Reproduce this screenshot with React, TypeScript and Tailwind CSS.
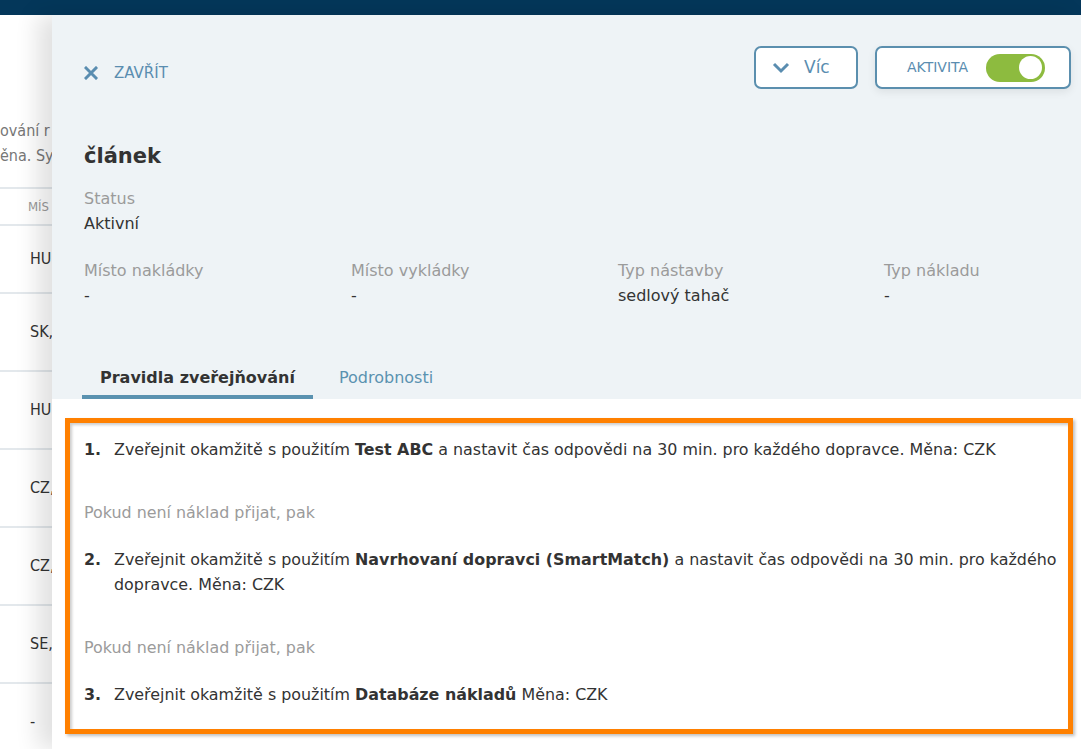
import React from 'react';

const font = { fontFamily: '"DejaVu Sans", "Liberation Sans", sans-serif' };
const narrow = { fontFamily: '"DejaVu Sans Condensed", "DejaVu Sans", sans-serif' };

const bgRows = ['HU', 'SK,', 'HU', 'CZ,', 'CZ,', 'SE,', '-'];

const fields = [
  { label: 'Místo nakládky', value: '-' },
  { label: 'Místo vykládky', value: '-' },
  { label: 'Typ nástavby', value: 'sedlový tahač' },
  { label: 'Typ nákladu', value: '-' },
];

const Rule = ({ n, children }: { n: number; children: React.ReactNode }) => (
  <div className="flex leading-[25px]">
    <span className="w-[30px] shrink-0 font-bold">{n}.</span>
    <p>{children}</p>
  </div>
);

const Fallback = () => (
  <p className="mt-[38px] mb-[22px] leading-[25px] text-[#9b9b9b]">Pokud není náklad přijat, pak</p>
);

export default function App() {
  return (
    <div className="relative h-[749px] w-[1081px] overflow-hidden bg-white text-[#333]" style={font}>
      <div className="h-[15px] bg-[#04375a]" />

      {/* page underneath the drawer */}
      <div className="text-[16px]" style={narrow}>
        <div className="h-[103px]" />
        <p className="leading-[25px] text-[#777]">ování r</p>
        <p className="leading-[25px] text-[#777]">ěna. Sy</p>
        <div className="mt-[19px] flex h-[39px] items-center border-y-2 border-[#e3e8ec] pl-[28px] text-[13px] text-[#999]">MÍS</div>
        {bgRows.map((r, i) => (
          <div key={i} className={`${i === 0 ? 'h-[68px]' : 'h-[78px]'} flex items-center border-b-2 border-[#e3e8ec] pl-[30px]`}>
            {r}
          </div>
        ))}
      </div>

      {/* drawer */}
      <div className="absolute left-[52px] top-[15px] right-0 bottom-0 flex flex-col bg-[#eef3f6] shadow-[-14px_0_22px_rgba(0,0,0,0.12)]">
        <div className="flex items-start justify-between pl-[32px] pr-[10px] pt-[31px]">
          <button className="mt-[16px] flex items-center gap-[16px] text-[15px] text-[#5a8db0]">
            <svg width="14" height="14" viewBox="0 0 14 14">
              <path d="M2 2 L12 12 M12 2 L2 12" stroke="#5a8db0" strokeWidth="3" strokeLinecap="square" />
            </svg>
            ZAVŘÍT
          </button>
          <div className="flex gap-[17px]">
            <button className="flex h-[43px] w-[104px] items-center gap-[14px] rounded-[7px] border-2 border-[#5b8fae] bg-white pl-[16px] text-[17px] text-[#5a8db0]">
              <svg width="18" height="12" viewBox="0 0 18 12">
                <path d="M2 2 L9 9 L16 2" fill="none" stroke="#5a8db0" strokeWidth="3" />
              </svg>
              Víc
            </button>
            <div className="flex h-[43px] w-[196px] items-center rounded-[7px] border-2 border-[#5b8fae] bg-white pl-[30px] shadow-[0_3px_8px_rgba(0,0,0,0.08)]">
              <span className="text-[14px] text-[#5a8db0]">AKTIVITA</span>
              <div className="ml-[18px] flex h-[28px] w-[59px] items-center justify-end rounded-full bg-[#8dbb3f] pr-[3px]">
                <div className="h-[23px] w-[23px] rounded-full bg-white" />
              </div>
            </div>
          </div>
        </div>

        <div className="pl-[32px]">
          <h2 className="mt-[53px] text-[21px] font-bold leading-[28px]">článek</h2>
          <div className="mt-[16px] text-[16px] leading-[25px]">
            <p className="text-[#9b9b9b]">Status</p>
            <p>Aktivní</p>
          </div>
          <div className="mt-[22px] grid grid-cols-[267px_267px_266px_1fr] text-[16px] leading-[25px]">
            {fields.map((f) => (
              <div key={f.label}>
                <p className="text-[#9b9b9b]">{f.label}</p>
                <p>{f.value}</p>
              </div>
            ))}
          </div>
        </div>

        <div className="mt-[57px] flex pl-[30px] text-[16px]">
          <div className="border-b-4 border-[#5a92b0] px-[18px] pb-[5px] font-bold leading-[25px]">Pravidla zveřejňování</div>
          <div className="px-[26px] pb-[5px] leading-[25px] text-[#5a92b0]">Podrobnosti</div>
        </div>

        <div className="flex-1 bg-white pl-[13px] pr-[8px] pt-[19px]">
          <div className="border-[5px] border-[#ff8000] bg-white shadow-[2px_2px_3px_rgba(0,0,0,0.25)]">
            <div className="pl-[14px] pr-[8px] pt-[14px] pb-[22px] text-[15.9px] shadow-[inset_2px_2px_3px_rgba(0,0,0,0.2)]">
              <Rule n={1}>
                Zveřejnit okamžitě s použitím <b>Test ABC</b> a nastavit čas odpovědi na 30 min. pro každého dopravce. Měna: CZK
              </Rule>
              <Fallback />
              <Rule n={2}>
                Zveřejnit okamžitě s použitím <b>Navrhovaní dopravci (SmartMatch)</b> a nastavit čas odpovědi na 30 min. pro každého dopravce. Měna: CZK
              </Rule>
              <Fallback />
              <Rule n={3}>
                Zveřejnit okamžitě s použitím <b>Databáze nákladů</b> Měna: CZK
              </Rule>
            </div>
          </div>
        </div>
      </div>
    </div>
  );
}
